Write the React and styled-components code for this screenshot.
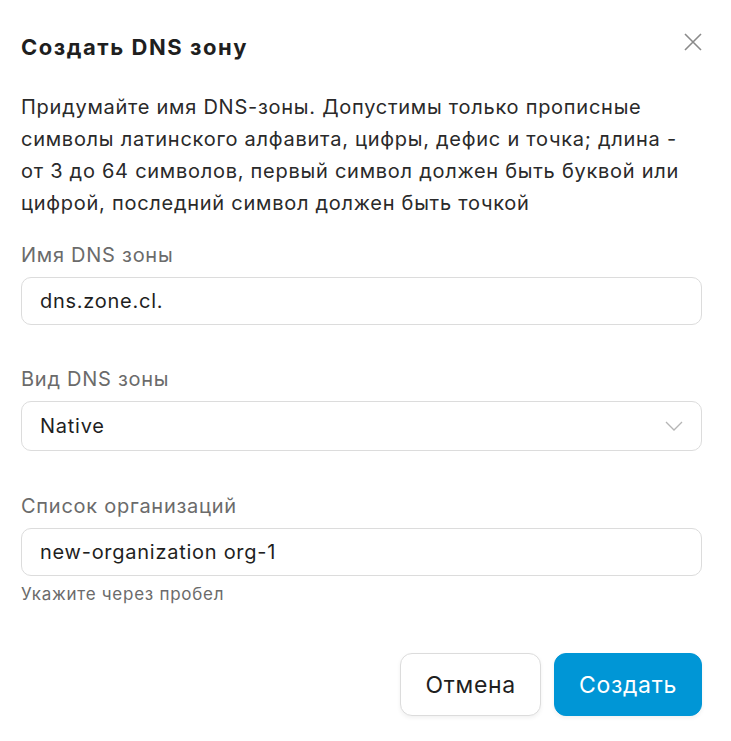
import React from "react";
import styled, { createGlobalStyle } from "styled-components";

const GlobalStyle = createGlobalStyle`
  body {
    margin: 0;
    background: #fff;
    font-family: Inter, Roboto, "Liberation Sans", sans-serif;
    letter-spacing: 0.046em;
    color: #1f1f1f;
  }
`;

const Modal = styled.div`
  width: 731px;
  box-sizing: border-box;
  padding: 29px 29px 25px 21px;
`;

const Header = styled.div`
  display: flex;
  align-items: flex-start;
  justify-content: space-between;
`;

const Title = styled.h2`
  margin: 0;
  font-size: 22px;
  font-weight: 700;
  letter-spacing: 0.07em;
  line-height: 36px;
  color: #1f1f1f;
`;

const CloseButton = styled.button`
  border: none;
  background: none;
  padding: 0;
  margin-top: 4px;
  width: 18px;
  height: 18px;
  cursor: pointer;
  color: #8a8a8a;
`;

const Description = styled.p`
  margin: 26px 0 0;
  font-size: 20px;
  line-height: 32px;
  color: #2a2a2a;
`;

const Field = styled.div`
  margin-top: ${(p) => p.$gap}px;
`;

const Label = styled.div`
  font-size: 20px;
  line-height: 28px;
  color: #6b6b6b;
  margin-bottom: 8px;
`;

const InputBox = styled.div`
  position: relative;
  height: ${(p) => p.$height || 48}px;
  box-sizing: border-box;
  border: 1px solid #dcdcdc;
  border-radius: 10px;
  display: flex;
  align-items: center;
  padding: 0 18px;
  font-size: 20px;
  color: #1f1f1f;
`;

const Chevron = styled.svg`
  position: absolute;
  right: 18px;
  top: 50%;
  margin-top: -5px;
`;

const Hint = styled.div`
  font-size: 17px;
  line-height: 20px;
  color: #6b6b6b;
  margin-top: 8px;
`;

const Footer = styled.div`
  display: flex;
  justify-content: flex-end;
  gap: 13px;
  margin-top: 49px;
`;

const Button = styled.button`
  height: 63px;
  box-sizing: border-box;
  padding: 0 24px;
  border-radius: 12px;
  font-family: inherit;
  font-size: 23px;
  letter-spacing: 0.03em;
  border: 1px solid ${(p) => (p.$primary ? "#0096d6" : "#dcdcdc")};
  background: ${(p) => (p.$primary ? "#0096d6" : "#fff")};
  color: ${(p) => (p.$primary ? "#fff" : "#1f1f1f")};
  box-shadow: 0 2px 4px rgba(0, 0, 0, 0.06);
  cursor: pointer;
`;

export default function App() {
  return (
    <Modal>
      <GlobalStyle />
      <Header>
        <Title>Создать DNS зону</Title>
        <CloseButton aria-label="Закрыть">
          <svg width="18" height="18" viewBox="0 0 18 18">
            <path d="M1 1 L17 17 M17 1 L1 17" stroke="currentColor" strokeWidth="1.6" />
          </svg>
        </CloseButton>
      </Header>
      <Description>
        Придумайте имя DNS-зоны. Допустимы только прописные символы латинского
        алфавита, цифры, дефис и точка; длина - от 3 до 64 символов, первый
        символ должен быть буквой или цифрой, последний символ должен быть точкой
      </Description>
      <Field $gap={22}>
        <Label>Имя DNS зоны</Label>
        <InputBox>dns.zone.cl.</InputBox>
      </Field>
      <Field $gap={40}>
        <Label>Вид DNS зоны</Label>
        <InputBox $height={50}>
          Native
          <Chevron width="18" height="10" viewBox="0 0 18 10">
            <path d="M1 1 L9 9 L17 1" fill="none" stroke="#b5b5b5" strokeWidth="1.3" />
          </Chevron>
        </InputBox>
      </Field>
      <Field $gap={41}>
        <Label>Список организаций</Label>
        <InputBox>new-organization org-1</InputBox>
        <Hint>Укажите через пробел</Hint>
      </Field>
      <Footer>
        <Button>Отмена</Button>
        <Button $primary>Создать</Button>
      </Footer>
    </Modal>
  );
}
